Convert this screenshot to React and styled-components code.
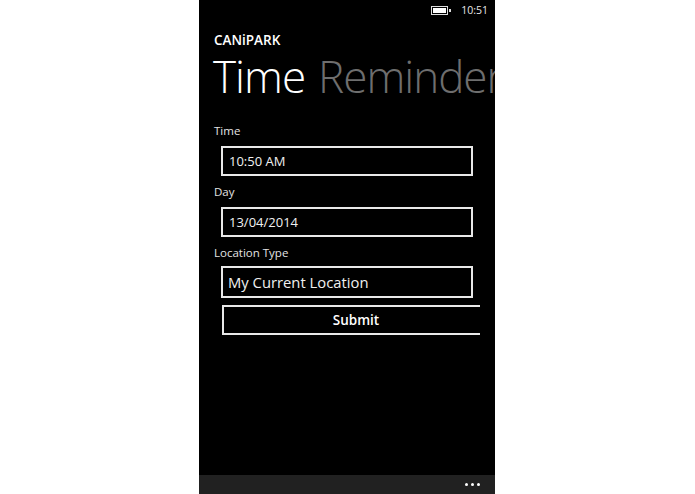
import React from "react";
import styled, { createGlobalStyle } from "styled-components";

const Global = createGlobalStyle`
  html, body { margin: 0; padding: 0; background: #fff; }
  body { font-family: "Open Sans", "Noto Sans", sans-serif; }
`;

const Page = styled.div`
  width: 695px;
  height: 494px;
  padding-left: 199px;
  box-sizing: border-box;
  overflow: hidden;
`;

const Phone = styled.div`
  width: 296px;
  height: 494px;
  background: #000;
  color: #fff;
  display: flex;
  flex-direction: column;
  overflow: hidden;
`;

const StatusBar = styled.div`
  height: 20px;
  display: flex;
  align-items: center;
  justify-content: flex-end;
  gap: 10px;
  padding-right: 7px;
  font-size: 10.5px;
  color: #e8e8e8;
`;

const AppTitle = styled.div`
  margin: 11px 0 0 15px;
  font-size: 13.5px;
  line-height: 18px;
  font-weight: 600;
`;

const Pivot = styled.div`
  display: flex;
  gap: 13px;
  margin: 2px 0 0 14px;
  white-space: nowrap;
  font-size: 44px;
  line-height: 50px;
  font-weight: 300;
  letter-spacing: -1px;
`;

const PivotItem = styled.span`
  color: ${(p) => (p.$active ? "#fff" : "#6e6e6e")};
`;

const Form = styled.div`
  flex: 1;
  display: flex;
  flex-direction: column;
  padding: 22px 0 0 15px;
`;

const Label = styled.div`
  font-size: 11.5px;
  line-height: 16px;
  color: #e4e4e4;
  margin-bottom: ${(p) => p.$gap}px;
`;

const Field = styled.div`
  box-sizing: border-box;
  width: 252px;
  height: ${(p) => p.$h}px;
  margin: 0 0 ${(p) => p.$after}px 7px;
  border: 2px solid #e8e8e8;
  display: flex;
  align-items: center;
  padding-left: ${(p) => p.$pad}px;
  padding-bottom: ${(p) => p.$lift}px;
  font-size: ${(p) => p.$size}px;
  color: #f0f0f0;
`;

const Submit = styled.button`
  box-sizing: border-box;
  width: 258px;
  height: 30px;
  margin-left: 8px;
  padding: 0 0 0 8px;
  background: #000;
  color: #fff;
  font-family: inherit;
  font-size: 13.5px;
  font-weight: 600;
  border: 2px solid #e8e8e8;
  border-right: 0;
  border-radius: 0;
`;

const AppBar = styled.div`
  height: 19px;
  background: #212121;
  display: flex;
  align-items: center;
  justify-content: flex-end;
  gap: 3px;
  padding-right: 15px;
`;

const Dot = styled.span`
  width: 3px;
  height: 3px;
  border-radius: 50%;
  background: #fff;
`;

function Battery() {
  return (
    <svg width="20" height="9" viewBox="0 0 20 9">
      <rect x="0.5" y="0.5" width="16" height="8" fill="none" stroke="#ddd" />
      <rect x="2" y="2" width="13" height="5" fill="#fff" />
      <rect x="18" y="3" width="2" height="3" fill="#ddd" />
    </svg>
  );
}

export default function App() {
  return (
    <Page>
      <Global />
      <Phone>
        <StatusBar>
          <Battery />
          <span>10:51</span>
        </StatusBar>
        <AppTitle>CANiPARK</AppTitle>
        <Pivot>
          <PivotItem $active>Time</PivotItem>
          <PivotItem>Reminder</PivotItem>
        </Pivot>
        <Form>
          <Label $gap={7}>Time</Label>
          <Field $h={30} $after={8} $pad={6} $lift={1} $size={13}>10:50 AM</Field>
          <Label $gap={7}>Day</Label>
          <Field $h={30} $after={8} $pad={6} $lift={1} $size={13}>13/04/2014</Field>
          <Label $gap={5}>Location Type</Label>
          <Field $h={32} $after={7} $pad={5} $lift={1} $size={14.8}>My Current Location</Field>
          <Submit>Submit</Submit>
        </Form>
        <AppBar>
          <Dot />
          <Dot />
          <Dot />
        </AppBar>
      </Phone>
    </Page>
  );
}
